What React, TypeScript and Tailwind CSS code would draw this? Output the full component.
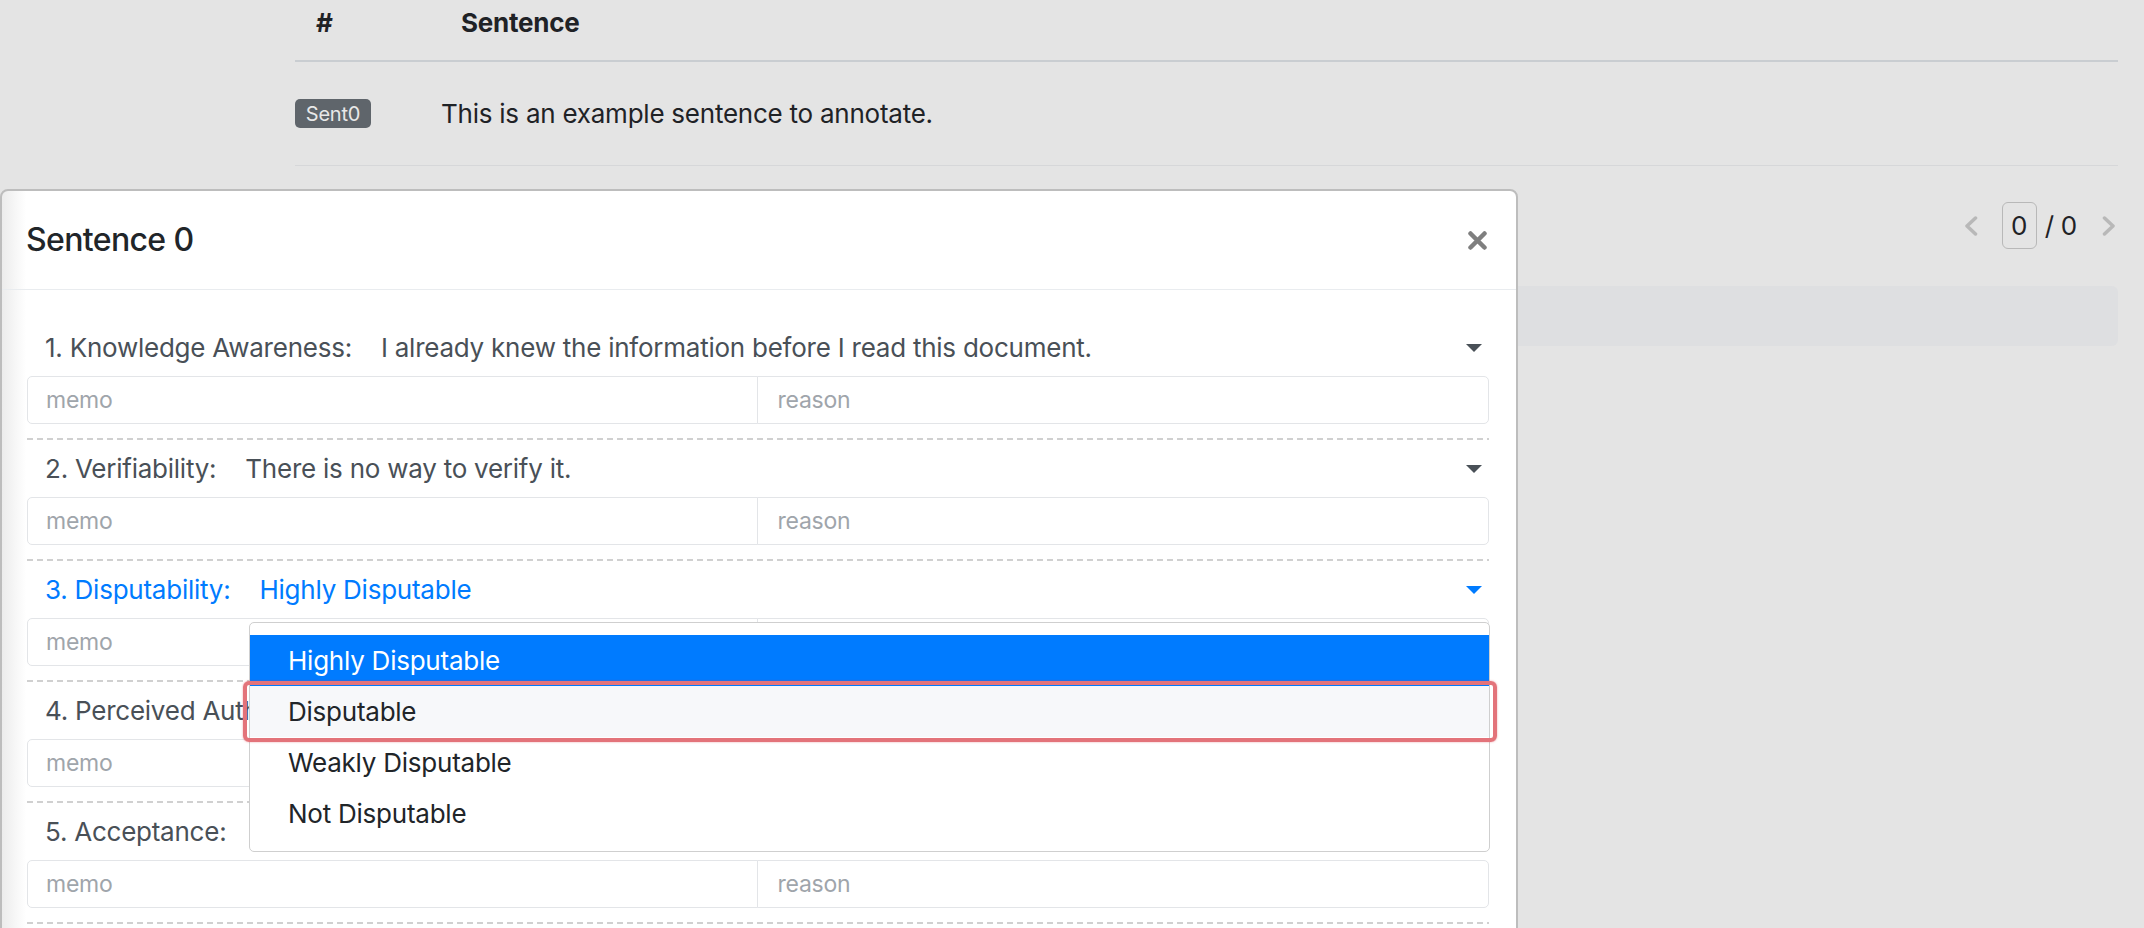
import React from 'react';

type Item = { n: number; label: string; value: string; active?: boolean };

const items: Item[] = [
  { n: 1, label: 'Knowledge Awareness:', value: 'I already knew the information before I read this document.' },
  { n: 2, label: 'Verifiability:', value: 'There is no way to verify it.' },
  { n: 3, label: 'Disputability:', value: 'Highly Disputable', active: true },
  { n: 4, label: 'Perceived Authority:', value: '' },
  { n: 5, label: 'Acceptance:', value: '' },
];

const options = ['Highly Disputable', 'Disputable', 'Weakly Disputable', 'Not Disputable'];

const Caret = ({ color }: { color: string }) => (
  <svg width="16" height="8" viewBox="0 0 16 8" className="shrink-0">
    <path d="M0 0h16L8 8z" fill={color} />
  </svg>
);

const Chevron = ({ dir }: { dir: 'left' | 'right' }) => (
  <svg width="14" height="20" viewBox="0 0 14 20">
    <polyline
      points={dir === 'left' ? '11.5,2 3,10 11.5,18' : '2.5,2 11,10 2.5,18'}
      fill="none"
      stroke="#b8b8b8"
      strokeWidth="3.5"
      strokeLinecap="round"
      strokeLinejoin="round"
    />
  </svg>
);

const Question = ({ item }: { item: Item }) => {
  const tone = item.active ? 'text-[#007bff]' : 'text-[#495057]';
  return (
    <div>
      <div className={`flex h-[57px] items-center pl-[18px] pr-[7px] text-[26px] ${tone}`}>
        <span className="whitespace-nowrap">
          {item.n}. {item.label}
        </span>
        <span className="ml-[29px] flex-1 whitespace-nowrap">{item.value}</span>
        <Caret color={item.active ? '#007bff' : '#495057'} />
      </div>
      <div className="flex h-[48px]">
        <input
          readOnly
          placeholder="memo"
          className="h-full min-w-0 flex-1 rounded-l-[5px] border border-[#e3e5e8] bg-white pl-[18px] text-[23px] outline-none placeholder:text-[#9fa5ab]"
        />
        <input
          readOnly
          placeholder="reason"
          className="-ml-px h-full min-w-0 flex-1 rounded-r-[5px] border border-[#e3e5e8] bg-white pl-[20px] text-[23px] outline-none placeholder:text-[#9fa5ab]"
        />
      </div>
      <div className="pt-[14px]">
        <div className="h-[2px] bg-[repeating-linear-gradient(90deg,#d0d0d0_0_6px,transparent_6px_10px)]" />
      </div>
    </div>
  );
};

export default function App() {
  return (
    <div className="relative h-[928px] w-[2144px] overflow-hidden bg-[#e4e4e4] font-[family-name:Inter,'Liberation_Sans',sans-serif] tracking-[-0.015em] text-[#1f2226]">
      {/* page behind the backdrop */}
      <div className="pl-[295px] pr-[26px]">
        <div className="flex h-[62px] border-b-2 border-[#c9cdd1] pt-[7px] text-[26px] font-bold leading-[32px]">
          <div className="w-[166px] pl-[21px]">#</div>
          <div>Sentence</div>
        </div>
        <div className="flex h-[104px] items-center border-b border-[#d6d7d9]">
          <span className="flex h-[29px] w-[76px] items-center justify-center rounded-[5px] bg-[#5f656b] text-[20px] text-[#e8e8e8]">
            Sent0
          </span>
          <span className="ml-[70px] text-[26px]">This is an example sentence to annotate.</span>
        </div>
        <div className="flex items-center justify-end pr-[2px] pt-[36px] text-[26px]">
          <Chevron dir="left" />
          <div className="ml-[24px] flex h-[47px] w-[35px] items-center justify-center rounded-[6px] border border-[#b8b8b8]">
            0
          </div>
          <span className="ml-[8px]">/ 0</span>
          <span className="ml-[25px]">
            <Chevron dir="right" />
          </span>
        </div>
        <div className="mt-[37px] h-[60px] rounded-[6px] bg-[#dedfe1]" />
      </div>

      {/* modal */}
      <div className="absolute left-0 top-[189px] h-[780px] w-[1518px] rounded-[8px] border-2 border-[#bdbdbd] bg-[linear-gradient(90deg,#ececec,#ffffff_24px)]">
        <div className="flex h-[99px] items-center justify-between border-b border-[#e9ecef] pl-[24px] pr-[29px]">
          <h5 className="text-[32px] font-medium tracking-[-0.02em] text-[#212529]">Sentence 0</h5>
          <svg width="19" height="19" viewBox="0 0 19 19">
            <path d="M2.5 2.5l14 14M16.5 2.5l-14 14" stroke="#7f7f7f" strokeWidth="4.5" strokeLinecap="round" />
          </svg>
        </div>
        <div className="pl-[25px] pr-[27px] pt-[29px]">
          {items.map((item) => (
            <Question key={item.n} item={item} />
          ))}
        </div>
      </div>

      {/* open select menu */}
      <div className="absolute left-[249px] top-[622px] w-[1241px] rounded-[5px] border border-[#cfcfcf] bg-white py-[12px] text-[26px]">
        {options.map((o, i) => (
          <div
            key={o}
            className={`relative flex h-[51px] items-center pl-[38px] ${
              i === 0 ? 'bg-[#007bff] text-white' : i === 1 ? 'bg-[#f7f8fa] text-[#212529]' : 'text-[#212529]'
            }`}
          >
            {o}
            {i === 1 && (
              <span className="absolute -bottom-[5px] -left-[7px] -right-[8px] -top-[5px] rounded-[6px] border-4 border-[#e3737a] shadow-[0_0_2px_rgba(220,53,69,0.5)]" />
            )}
          </div>
        ))}
      </div>
    </div>
  );
}
